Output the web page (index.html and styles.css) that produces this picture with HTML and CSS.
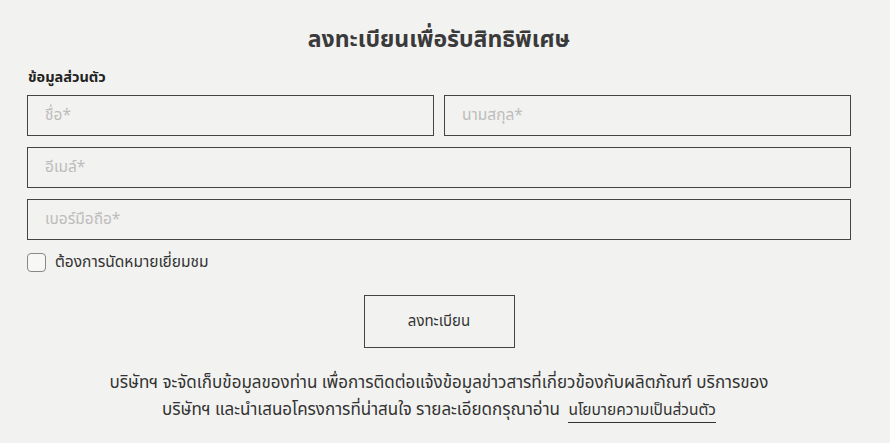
FILE: index.html
```html
<!DOCTYPE html>
<html lang="th">
<head>
<meta charset="utf-8">
<link rel="stylesheet" href="styles.css">
</head>
<body>
<div class="page">
  <h1 class="title">ลงทะเบียนเพื่อรับสิทธิพิเศษ</h1>
  <div class="label">ข้อมูลส่วนตัว</div>
  <div class="row two">
    <div class="field">ชื่อ*</div>
    <div class="field">นามสกุล*</div>
  </div>
  <div class="row"><div class="field">อีเมล์*</div></div>
  <div class="row"><div class="field">เบอร์มือถือ*</div></div>
  <label class="check"><span class="box"></span><span>ต้องการนัดหมายเยี่ยมชม</span></label>
  <div class="btn-wrap"><div class="btn">ลงทะเบียน</div></div>
  <p class="note">บริษัทฯ จะจัดเก็บข้อมูลของท่าน เพื่อการติดต่อแจ้งข้อมูลข่าวสารที่เกี่ยวข้องกับผลิตภัณฑ์ บริการของ<br>บริษัทฯ และนำเสนอโครงการที่น่าสนใจ รายละเอียดกรุณาอ่าน <a class="link">นโยบายความเป็นส่วนตัว</a></p>
</div>
</body>
</html>
```
FILE: styles.css
```css
html, body { margin: 0; padding: 0; }
body {
  background: #f2f2f0;
  color: #333;
  font-family: "Noto Sans Thai", "Noto Sans", "DejaVu Sans", sans-serif;
}
.page {
  width: 824px;
  padding: 0 0 0 27px;
}
.title {
  margin: 0;
  padding-top: 24px;
  height: 36px;
  line-height: 32px;
  font-size: 23px;
  font-weight: 700;
  text-align: center;
  color: #3a3a3a;
}
.label {
  margin-top: 8px;
  font-size: 14.5px;
  font-weight: 700;
  line-height: 20px;
  height: 21px;
  padding-left: 1px;
  color: #222;
}
.row { display: flex; gap: 10px; margin-top: 6px; }
.row + .row { margin-top: 11px; }
.field {
  flex: 1;
  height: 39px;
  border: 1px solid #444;
  box-sizing: content-box;
  padding-left: 17px;
  line-height: 39px;
  font-size: 15.5px;
  color: #bdbdbd;
}
.check {
  display: flex;
  align-items: center;
  gap: 9px;
  margin-top: 12px;
  font-size: 15.5px;
  color: #333;
  height: 20px;
}
.box {
  width: 17px; height: 17px;
  border: 1px solid #888;
  border-radius: 4px;
  background: #f7f7f6;
}
.btn-wrap { display: flex; justify-content: center; margin-top: 23px; }
.btn {
  width: 149px; height: 51px;
  border: 1px solid #444;
  display: flex; align-items: center; justify-content: center;
  font-size: 15px;
  color: #333;
}
.note {
  margin: 22px 0 0;
  text-align: center;
  font-size: 17px;
  line-height: 27px;
  color: #333;
}
.link {
  display: inline-block;
  margin-left: 4px;
  font-size: 15.5px;
  line-height: 22px;
  color: #333;
  text-decoration: none;
  border-bottom: 1px solid #333;
}
```
